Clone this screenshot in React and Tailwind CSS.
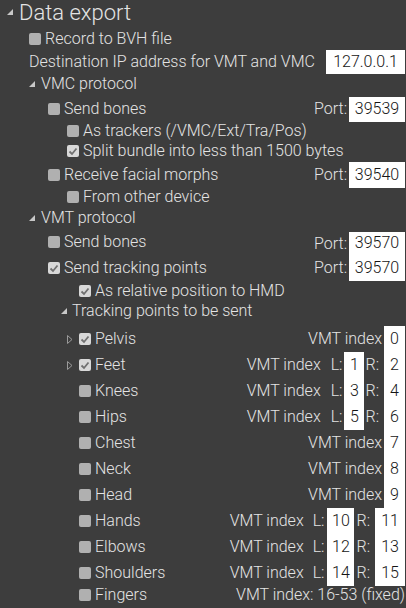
import React from "react";

const OpenArrow = () => (
  <svg width="6" height="6" viewBox="0 0 6 6" className="shrink-0">
    <polygon points="6,0 6,6 0,6" fill="#c8c8c8" />
  </svg>
);

const ClosedArrow = () => (
  <svg width="6" height="9" viewBox="0 0 6 9" className="shrink-0">
    <polygon points="0.5,0.5 5,4.5 0.5,8.5" fill="none" stroke="#9a9a9a" strokeWidth="1" />
  </svg>
);

const Check = ({ checked }) =>
  checked ? (
    <div className="w-[12px] h-[12px] rounded-[2px] bg-[#d8d8d8] flex items-center justify-center shrink-0">
      <svg width="10" height="10" viewBox="0 0 10 10">
        <polyline points="1.5,5.5 4,8 8.5,2.5" fill="none" stroke="#707070" strokeWidth="1.8" />
      </svg>
    </div>
  ) : (
    <div className="w-[12px] h-[12px] rounded-[2px] bg-[#b0b0b0] shrink-0" />
  );

const Port = ({ value, h }) => (
  <div className="ml-auto flex items-center pr-[1px]">
    <span>Port:</span>
    <div className={`ml-[2px] w-[56px] bg-white text-[#151515] flex items-center justify-center ${h}`}>{value}</div>
  </div>
);

const Single = ({ v }) => (
  <div className="ml-auto flex items-center h-full pr-[1px]">
    <span>VMT index</span>
    <div className="ml-[2px] w-[21px] h-full bg-white text-[#151515] flex items-center justify-center">{v}</div>
  </div>
);

const Pair = ({ l, r, wide }) =>
  wide ? (
    <div className="ml-auto flex items-center h-full pr-[1px]">
      <span>VMT index</span>
      <span className="ml-[9px]">L:</span>
      <div className="ml-[3px] w-[27px] h-full bg-white text-[#151515] flex items-center justify-center">{l}</div>
      <span className="ml-[2px]">R:</span>
      <div className="ml-[5px] w-[30px] h-full bg-white text-[#151515] flex items-center justify-center">{r}</div>
    </div>
  ) : (
    <div className="ml-auto flex items-center h-full pr-[1px]">
      <span>VMT index</span>
      <span className="ml-[10px]">L:</span>
      <div className="ml-[2px] w-[20px] h-full bg-white text-[#151515] flex items-center justify-center">{l}</div>
      <span className="ml-[1px]">R:</span>
      <div className="ml-[5px] w-[21px] h-full bg-white text-[#151515] flex items-center justify-center">{r}</div>
    </div>
  );

const ListRow = ({ arrow, checked, label, children }) => (
  <div className="h-[26px] flex items-center">
    <div className="w-[79px] flex justify-end pr-[6px]">{arrow ? <ClosedArrow /> : null}</div>
    <Check checked={checked} />
    <span className="ml-[4px]">{label}</span>
    {children}
  </div>
);

export default function App() {
  return (
    <div className="w-[406px] h-[608px] overflow-hidden bg-[#3d3d3d] text-[#e4e4e4] font-['Roboto',sans-serif] font-light text-[16px] leading-[20px]">
      {/* Title */}
      <div className="h-[26px] flex items-center pl-[7px]">
        <div className="self-start mt-[9px]">
          <OpenArrow />
        </div>
        <span className="ml-[6px] text-[22px] leading-[26px]">Data export</span>
      </div>

      {/* Record */}
      <div className="mt-[3px] h-[20px] flex items-center pl-[29px]">
        <Check />
        <span className="ml-[4px]">Record to BVH file</span>
      </div>

      {/* Destination */}
      <div className="mt-[1px] h-[24px] flex items-center pl-[29px]">
        <span>Destination IP address for VMT and VMC</span>
        <div className="ml-auto mr-[1px] w-[79px] h-full bg-white text-[#151515] flex items-center justify-center">127.0.0.1</div>
      </div>

      {/* VMC protocol */}
      <div className="h-[20px] flex items-center pl-[29px]">
        <OpenArrow />
        <span className="ml-[6px]">VMC protocol</span>
      </div>

      <div className="mt-[3px] h-[24px] flex items-center pl-[48px]">
        <Check />
        <span className="ml-[4px]">Send bones</span>
        <Port value="39539" h="h-[25px]" />
      </div>

      <div className="h-[20px] flex items-center pl-[67px]">
        <Check />
        <span className="ml-[4px]">As trackers (/VMC/Ext/Tra/Pos)</span>
      </div>

      <div className="h-[20px] flex items-center pl-[67px]">
        <Check checked />
        <span className="ml-[4px]">Split bundle into less than 1500 bytes</span>
      </div>

      <div className="mt-[1px] h-[25px] flex items-center pl-[48px]">
        <Check />
        <span className="ml-[4px]">Receive facial morphs</span>
        <Port value="39540" h="h-[26px]" />
      </div>

      <div className="h-[20px] flex items-center pl-[67px]">
        <Check />
        <span className="ml-[4px]">From other device</span>
      </div>

      {/* VMT protocol */}
      <div className="mt-[1px] h-[20px] flex items-center pl-[29px]">
        <OpenArrow />
        <span className="ml-[6px]">VMT protocol</span>
      </div>

      <div className="h-[27px] flex items-center pl-[48px]">
        <Check />
        <span className="ml-[4px]">Send bones</span>
        <div className="ml-auto self-end flex items-center pr-[1px]">
          <span>Port:</span>
          <div className="ml-[2px] w-[56px] h-[23px] bg-white text-[#151515] flex items-center justify-center pb-[2px]">39570</div>
        </div>
      </div>

      <div className="h-[26px] flex items-center pl-[48px]">
        <Check checked />
        <span className="ml-[4px]">Send tracking points</span>
        <Port value="39570" h="h-[26px]" />
      </div>

      <div className="h-[20px] flex items-center pl-[79px]">
        <Check checked />
        <span className="ml-[4px]">As relative position to HMD</span>
      </div>

      <div className="h-[20px] flex items-center pl-[61px]">
        <OpenArrow />
        <span className="ml-[5px]">Tracking points to be sent</span>
      </div>

      <div className="mt-[5px]">
        <ListRow arrow checked label="Pelvis"><Single v="0" /></ListRow>
        <ListRow arrow checked label="Feet"><Pair l="1" r="2" /></ListRow>
        <ListRow label="Knees"><Pair l="3" r="4" /></ListRow>
        <ListRow label="Hips"><Pair l="5" r="6" /></ListRow>
        <ListRow label="Chest"><Single v="7" /></ListRow>
        <ListRow label="Neck"><Single v="8" /></ListRow>
        <ListRow label="Head"><Single v="9" /></ListRow>
        <ListRow label="Hands"><Pair wide l="10" r="11" /></ListRow>
        <ListRow label="Elbows"><Pair wide l="12" r="13" /></ListRow>
        <ListRow label="Shoulders"><Pair wide l="14" r="15" /></ListRow>
      </div>

      <div className="h-[18px] flex items-center">
        <div className="w-[79px]" />
        <Check />
        <span className="ml-[4px]">Fingers</span>
        <span className="ml-auto pr-[1px]">VMT index: 16-53 (fixed)</span>
      </div>
    </div>
  );
}
